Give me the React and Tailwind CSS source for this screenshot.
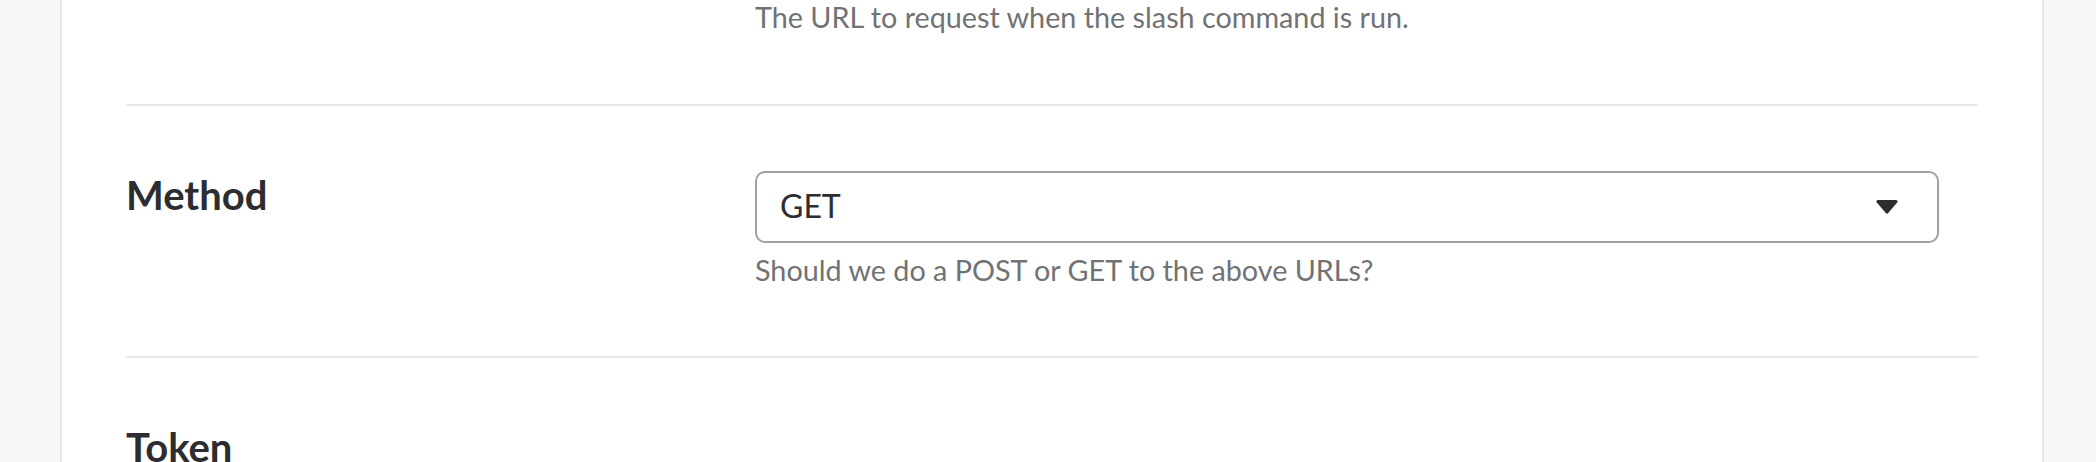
import React from "react";

function Arrow() {
  return (
    <svg width="24" height="16" viewBox="0 0 24 16" className="block">
      <path
        d="M3 2.5 L21 2.5 L12 13 Z"
        fill="#2c2d30"
        stroke="#2c2d30"
        strokeWidth="3.2"
        strokeLinejoin="round"
      />
    </svg>
  );
}

export default function App() {
  return (
    <div className="w-[2096px] h-[462px] overflow-hidden bg-[#f8f8f8] pl-[60px] pr-[52px] font-['Lato','Liberation_Sans',sans-serif]">
      <div className="min-h-[560px] border-x-2 border-[#e8e8e8] bg-white px-[64px]">
        {/* previous row (partial) */}
        <div className="flex -mt-[4px] pb-[64px]">
          <div className="w-[629px] shrink-0" />
          <div className="text-[28.75px] leading-[43.5px] text-[#717274]">
            The URL to request when the slash command is run.
          </div>
        </div>

        {/* Method row */}
        <div className="flex border-t-2 border-[#e8e8e8] pt-[65px] pb-[64px]">
          <div className="w-[629px] shrink-0 text-[40px] leading-[48px] font-bold text-[#2c2d30]">
            Method
          </div>
          <div className="flex flex-col">
            <div className="flex h-[72px] w-[1184px] items-center justify-between rounded-[10px] border-2 border-[#a0a0a0] pl-[23px] pr-[38px]">
              <span className="-mt-[2px] text-[32px] leading-[40px] text-[#2c2d30]">GET</span>
              <Arrow />
            </div>
            <div className="mt-[6px] text-[28.75px] leading-[43.5px] text-[#717274]">
              Should we do a POST or GET to the above URLs?
            </div>
          </div>
        </div>

        {/* Token row */}
        <div className="flex border-t-2 border-[#e8e8e8] pt-[65px] pb-[64px]">
          <div className="w-[629px] shrink-0 text-[40px] leading-[48px] font-bold text-[#2c2d30]">
            Token
          </div>
        </div>
      </div>
    </div>
  );
}
